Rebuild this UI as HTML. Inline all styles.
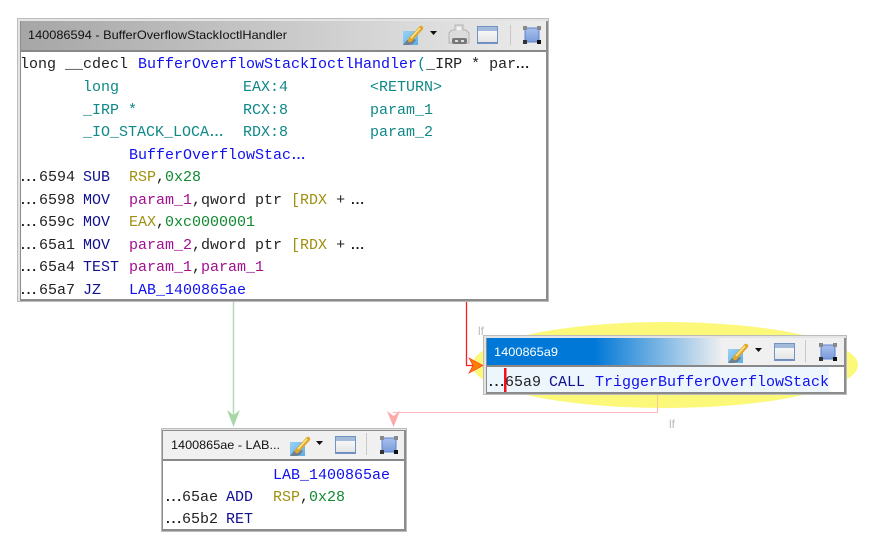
<!DOCTYPE html>
<html><head><meta charset="utf-8"><style>
html,body{margin:0;padding:0;background:#fff;width:881px;height:558px;overflow:hidden}
svg{display:block;position:absolute;left:0;top:0}
.c{font:15px "Liberation Mono",monospace;white-space:pre}
.t{font:12px "Liberation Sans",sans-serif;white-space:pre}
.d{font:bold 13px "Liberation Mono",monospace;fill:#111}
.k{fill:#222}.b{fill:#1010f0}.n{fill:#101090}.te{fill:#108888}.o{fill:#a09010}.g{fill:#108a30}.p{fill:#a01090}
</style></head><body>
<svg width="881" height="558" viewBox="0 0 881 558" xmlns="http://www.w3.org/2000/svg">
<defs>
<linearGradient id="g1" x1="0" x2="1" y1="0" y2="0"><stop offset="0" stop-color="#a6a6a6"/><stop offset="1" stop-color="#ececec"/></linearGradient>
<linearGradient id="g2" x1="0" x2="1" y1="0" y2="0"><stop offset="0" stop-color="#0078d7"/><stop offset=".3" stop-color="#0078d7"/><stop offset=".66" stop-color="#f0f0f0"/><stop offset="1" stop-color="#f0f0f0"/></linearGradient>
<linearGradient id="sq" x1="0" x2="0" y1="0" y2="1"><stop offset="0" stop-color="#a9c0ec"/><stop offset="1" stop-color="#7a9bdc"/></linearGradient>
<linearGradient id="wi" x1="0" x2="0" y1="0" y2="1"><stop offset="0" stop-color="#fff"/><stop offset="1" stop-color="#e2e2e2"/></linearGradient>
<linearGradient id="pa" x1="0" x2="1" y1="0" y2="1"><stop offset="0" stop-color="#9bd2f4"/><stop offset="1" stop-color="#5aaee8"/></linearGradient>
<g id="paint">
<rect x="1" y="6" width="15" height="14" fill="url(#pa)"/>
<path d="M1 20l4-5 6-2 3 2-3 4-4 1z" fill="#6f7f92"/>
<path d="M8 15L19 3" stroke="#e0a828" stroke-width="4.500" fill="none" stroke-linecap="round"/>
<path d="M9 13l9-10" stroke="#fbe79a" stroke-width="1.500" fill="none"/>
</g>
<g id="win">
<rect x=".5" y=".5" width="20" height="17" fill="url(#wi)" stroke="#7093c4"/>
<rect x="1" y="1" width="19" height="4" fill="#a3bbdb"/>
<rect x="1" y="16" width="19" height="1" fill="#6c8fc0"/>
</g>
<g id="sqr">
<rect x="2" y="2" width="14" height="14" fill="url(#sq)" stroke="#5d83d0"/>
<rect width="4" height="4" fill="#888"/><rect x="14" width="4" height="4" fill="#888"/>
<rect y="14" width="4" height="4" fill="#333"/><rect x="14" y="14" width="4" height="4" fill="#111"/>
</g>
<path id="dd" d="M0 0h7l-3.500 4z" fill="#111"/>
</defs>

<ellipse cx="665" cy="365" rx="193" ry="43" fill="#fbf87a"/>

<!-- edges -->
<path d="M233.500 302V422" stroke="#b4dab4" stroke-width="1.500" fill="none"/>
<path d="M227 410l6.500 17 6.500-17-6.500 5z" fill="#a8d8a8"/>
<path d="M466.500 302V365.500H474" stroke="#f02020" stroke-width="1.300" fill="none"/>
<path d="M469 358l14 7.500-14 7.500 4-7.500z" fill="#ff8000" stroke="#ff3030" stroke-width=".7"/>
<path d="M657.500 394V412.500H393" stroke="#fcb8b8" fill="none"/>
<path d="M657.500 394V408" stroke="#f4cc98" fill="none"/>
<path d="M387 411l6.500 16 6.500-16-6.500 5z" fill="#fcaaaa"/>
<text x="478" y="335" class="t" fill="#bbb">lf</text>
<text x="669" y="428" class="t" fill="#bbb">lf</text>

<!-- main window -->
<rect x="17" y="18" width="532" height="284" fill="#bcbcbc"/>
<rect x="18" y="19" width="530" height="282" fill="#e4e4e4"/>
<rect x="20" y="21" width="528" height="280" fill="#8c8c8c"/>
<rect x="21" y="21" width="525" height="278" fill="#fff"/>
<rect x="21" y="21" width="525" height="29" fill="url(#g1)"/>
<rect x="21" y="50" width="525" height="2" fill="#888"/>
<text x="28" y="39" class="t" fill="#111" textLength="259" lengthAdjust="spacingAndGlyphs">140086594 - BufferOverflowStackIoctlHandler</text>
<use href="#paint" x="402" y="25"/><use href="#dd" x="430" y="31"/>
<g transform="translate(449 24)">
<path d="M6 1h8v5h3l3 3v10H0V9l3-3h3z" fill="#dcdcdc" stroke="#b4b4b4"/>
<rect x="8" y="3" width="4" height="3" fill="#f4f4f4"/>
<rect x="3" y="14" width="15" height="6" rx="2" fill="#777"/><rect x="6" y="16" width="3" height="2" fill="#ddd"/><rect x="12" y="16" width="3" height="2" fill="#ddd"/>
</g>
<use href="#win" x="477" y="26"/>
<path d="M510.500 25V45" stroke="#c8c8c8"/>
<use href="#sqr" x="523" y="26"/>

<text y="68" class="c"><tspan x="20" class="k">long __cdecl </tspan><tspan x="138" class="b">BufferOverflowStackIoctlHandler</tspan><tspan class="te">(</tspan><tspan class="k">_IRP * par</tspan></text>
<text x="514" y="68" class="d" textLength="17">...</text>
<g class="c te">
<text x="83" y="91">long</text><text x="243" y="91">EAX:4</text><text x="370" y="91">&lt;RETURN&gt;</text>
<text x="83" y="114">_IRP *</text><text x="243" y="114">RCX:8</text><text x="370" y="114">param_1</text>
<text x="83" y="136">_IO_STACK_LOCA</text><text x="243" y="136">RDX:8</text><text x="370" y="136">param_2</text>
</g>
<text x="208" y="136" class="d" style="fill:#108888" textLength="17">...</text>
<text x="129" y="159" class="c b">BufferOverflowStac</text><text x="290" y="159" class="d" style="fill:#1010f0" textLength="17">...</text>

<g class="d"><text x="19" y="181" textLength="19">...</text><text x="19" y="204" textLength="19">...</text><text x="19" y="226" textLength="19">...</text><text x="19" y="249" textLength="19">...</text><text x="19" y="271" textLength="19">...</text><text x="19" y="294" textLength="19">...</text></g>
<g class="c">
<text x="39" y="181"><tspan class="k">6594</tspan><tspan x="83" class="n">SUB</tspan><tspan x="129" class="o">RSP</tspan><tspan class="k">,</tspan><tspan class="g">0x28</tspan></text>
<text x="39" y="204"><tspan class="k">6598</tspan><tspan x="83" class="n">MOV</tspan><tspan x="129" class="p">param_1</tspan><tspan class="k">,qword ptr </tspan><tspan class="o">[RDX</tspan><tspan class="k"> + </tspan></text>
<text x="39" y="226"><tspan class="k">659c</tspan><tspan x="83" class="n">MOV</tspan><tspan x="129" class="o">EAX</tspan><tspan class="k">,</tspan><tspan class="g">0xc0000001</tspan></text>
<text x="39" y="249"><tspan class="k">65a1</tspan><tspan x="83" class="n">MOV</tspan><tspan x="129" class="p">param_2</tspan><tspan class="k">,dword ptr </tspan><tspan class="o">[RDX</tspan><tspan class="k"> + </tspan></text>
<text x="39" y="271"><tspan class="k">65a4</tspan><tspan x="83" class="n">TEST</tspan><tspan x="129" class="p">param_1</tspan><tspan class="k">,</tspan><tspan class="p">param_1</tspan></text>
<text x="39" y="294"><tspan class="k">65a7</tspan><tspan x="83" class="n">JZ</tspan><tspan x="129" class="b">LAB_1400865ae</tspan></text>
</g>
<text x="349" y="204" class="d" textLength="17">...</text><text x="349" y="249" class="d" textLength="17">...</text>

<!-- window 2 -->
<rect x="483" y="335" width="364" height="60" fill="#bcbcbc"/>
<rect x="484" y="336" width="362" height="58" fill="#e4e4e4"/>
<rect x="486" y="338" width="360" height="56" fill="#8c8c8c"/>
<rect x="487" y="338" width="357" height="54" fill="#fff"/>
<rect x="487" y="338" width="357" height="27" fill="url(#g2)"/>
<rect x="487" y="365" width="357" height="2" fill="#888"/>
<rect x="487" y="367" width="342" height="25" fill="#edf6fd"/>
<text x="494" y="356" class="t" fill="#fff" textLength="64" lengthAdjust="spacingAndGlyphs">1400865a9</text>
<use href="#paint" x="727" y="343"/><use href="#dd" x="755" y="348"/>
<use href="#win" x="774" y="343"/>
<path d="M805.500 340V362" stroke="#c8c8c8"/>
<use href="#sqr" x="819" y="343"/>
<text x="487" y="386" class="d" textLength="19">...</text>
<g class="c"><text x="505" y="386"><tspan class="k">65a9</tspan><tspan x="549" class="n">CALL</tspan><tspan x="595" class="b">TriggerBufferOverflowStack</tspan></text></g>
<rect x="504" y="368" width="2.500" height="24" fill="#f01020"/>

<!-- window 3 -->
<rect x="161" y="428" width="246" height="104" fill="#bcbcbc"/>
<rect x="162" y="429" width="244" height="102" fill="#e4e4e4"/>
<rect x="162" y="430" width="244" height="101" fill="#8c8c8c"/>
<rect x="163" y="431" width="241" height="98" fill="#fff"/>
<rect x="163" y="431" width="241" height="28" fill="#f0f0f0"/>
<rect x="163" y="459" width="241" height="2" fill="#888"/>
<text x="171" y="449" class="t" fill="#111" textLength="109" lengthAdjust="spacingAndGlyphs">1400865ae - LAB...</text>
<use href="#paint" x="289" y="436"/><use href="#dd" x="316" y="441"/>
<use href="#win" x="335" y="436"/>
<path d="M366.500 433V455" stroke="#c8c8c8"/>
<use href="#sqr" x="380" y="436"/>
<text x="273" y="479" class="c b">LAB_1400865ae</text>
<g class="d"><text x="164" y="501" textLength="19">...</text><text x="164" y="523" textLength="19">...</text></g>
<g class="c">
<text x="182" y="501"><tspan class="k">65ae</tspan><tspan x="226" class="n">ADD</tspan><tspan x="273" class="o">RSP</tspan><tspan class="k">,</tspan><tspan class="g">0x28</tspan></text>
<text x="182" y="523"><tspan class="k">65b2</tspan><tspan x="226" class="n">RET</tspan></text>
</g>
</svg>
</body></html>
